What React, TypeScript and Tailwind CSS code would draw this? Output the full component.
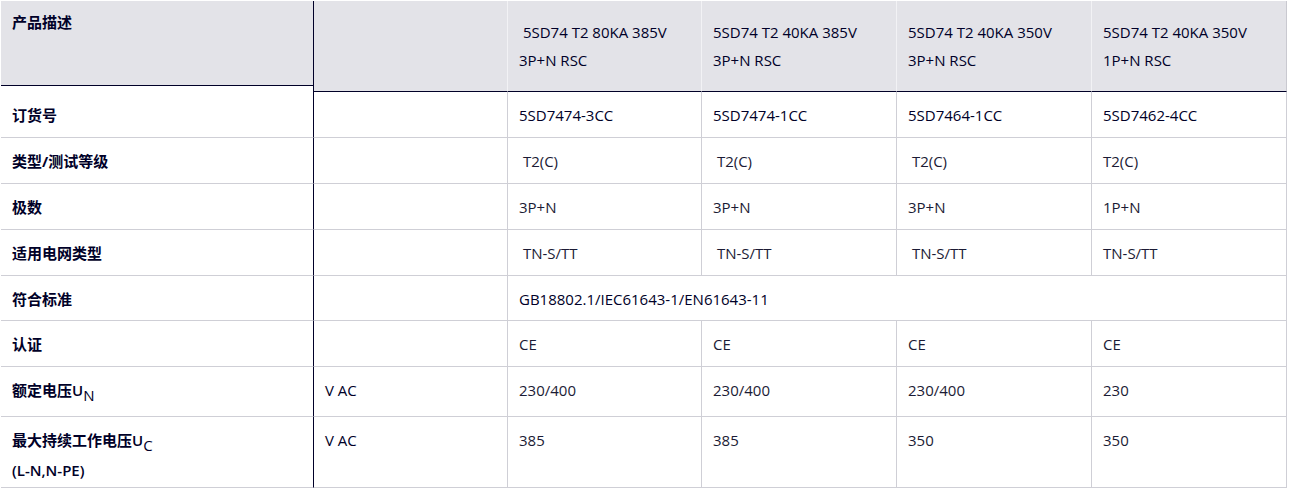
const font = { fontFamily: '"Open Sans", "Noto Sans CJK SC", sans-serif' }

type Row = {
  label: React.ReactNode
  unit?: string
  vals: string[]
  span?: boolean
  h: string
  strong?: boolean
}

const NB = '\u00a0'

const rows: Row[] = [
  { label: '订货号', vals: ['5SD7474-3CC', '5SD7474-1CC', '5SD7464-1CC', '5SD7462-4CC'], h: 'h-[46px]', strong: true },
  { label: '类型/测试等级', vals: [NB + 'T2(C)', NB + 'T2(C)', NB + 'T2(C)', 'T2(C)'], h: 'h-[46px]' },
  { label: '极数', vals: ['3P+N', '3P+N', '3P+N', '1P+N'], h: 'h-[46px]' },
  { label: '适用电网类型', vals: [NB + 'TN-S/TT', NB + 'TN-S/TT', NB + 'TN-S/TT', 'TN-S/TT'], h: 'h-[46px]' },
  { label: '符合标准', vals: ['GB18802.1/IEC61643-1/EN61643-11'], span: true, h: 'h-[45px]' },
  { label: '认证', vals: ['CE', 'CE', 'CE', 'CE'], h: 'h-[46px]' },
  {
    label: (
      <>
        额定电压<span className="font-semibold">U</span>
        <span className="font-medium align-[-5px]">N</span>
      </>
    ),
    unit: 'V AC',
    vals: ['230/400', '230/400', '230/400', '230'],
    h: 'h-[50px]',
  },
  {
    label: (
      <>
        最大持续工作电压<span className="font-semibold">U</span>
        <span className="font-medium align-[-5px]">C</span>
        <br />
        <span className="font-semibold">(L-N,N-PE)</span>
      </>
    ),
    unit: 'V AC',
    vals: ['385', '385', '350', '350'],
    h: 'h-[71px]',
  },
]

const headers = [
  [NB + '5SD74 T2 80KA 385V', '3P+N RSC'],
  ['5SD74 T2 40KA 385V', '3P+N RSC'],
  ['5SD74 T2 40KA 350V', '3P+N RSC'],
  ['5SD74 T2 40KA 350V', '1P+N RSC'],
]

export default function App() {
  return (
    <div className="min-h-screen bg-white pl-px pt-px text-[15px] text-[#000028]" style={font}>
      <div className="grid w-[1286px] grid-cols-[312px_194px_194px_195px_195px_196px]">
        {/* header */}
        <div className="h-[91px]">
          <div className="h-[85px] border-b border-[#000028] bg-[#e3e3e8] pl-[11px] pt-[9px] font-bold leading-6">
            产品描述
          </div>
        </div>
        <div className="h-[91px] border-b border-l border-[#000028] bg-[#e3e3e8]" />
        {headers.map((h, i) => (
          <div
            key={i}
            className={`h-[91px] border-b border-l border-b-[#000028] border-l-[#f2f2f5] bg-[#e3e3e8] pl-[11px] pt-[17px] leading-[28px] ${
              i === 3 ? 'border-r border-r-[#c9c9d0]' : ''
            }`}
          >
            <div>{h[0]}</div>
            <div>{h[1]}</div>
          </div>
        ))}

        {/* body */}
        {rows.map((r, ri) => (
          <div key={ri} className="contents">
            <div className={`${r.h} border-b border-[#cfcfd6] pl-[11px] pt-[11px] font-bold leading-[25px]`}>
              {r.label}
            </div>
            <div className={`${r.h} border-b border-l border-b-[#cfcfd6] border-l-[#000028] pl-[11px] pt-[11px] leading-6`}>
              {r.unit}
            </div>
            {r.span ? (
              <div className={`${r.h} col-span-4 border-b border-l border-r border-[#cfcfd6] pl-[11px] pt-[11px] leading-6`}>
                {r.vals[0]}
              </div>
            ) : (
              r.vals.map((v, vi) => (
                <div
                  key={vi}
                  className={`${r.h} border-b border-l border-[#cfcfd6] pl-[11px] pt-[11px] leading-6 ${
                    vi === 3 ? 'border-r' : ''
                  } ${r.strong ? 'font-medium' : 'text-[#1b1b35]'}`}
                >
                  {v}
                </div>
              ))
            )}
          </div>
        ))}
      </div>
    </div>
  )
}
